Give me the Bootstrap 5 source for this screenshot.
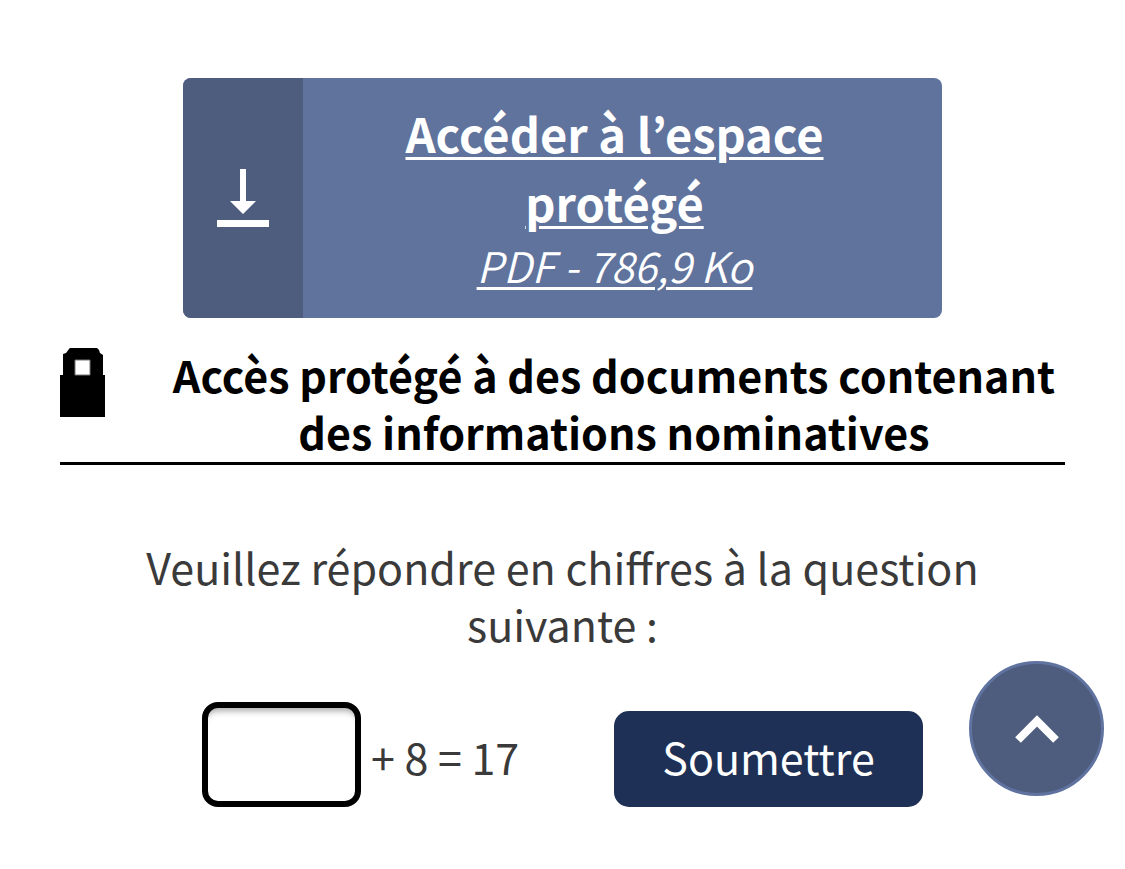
<!DOCTYPE html>
<html lang="fr">
<head>
<meta charset="utf-8">
<meta name="viewport" content="width=device-width, initial-scale=1">
<title>Espace protégé</title>
<link rel="stylesheet" href="https://cdn.jsdelivr.net/npm/bootstrap@5.3.0/dist/css/bootstrap.min.css">
<style>
body{font-family:"Noto Sans CJK JP","Noto Sans",sans-serif;font-size:43px;line-height:57px;color:#3a3a3a}
main{padding:78px 60px 60px}
.download{max-width:759px;min-height:240px;border-radius:8px;background:#60739d;color:#fff;overflow:hidden;text-decoration-thickness:3px;text-underline-offset:4px}
.download:hover{color:#fff}
.download-icon{width:120px;background:#4e5d7d}
.download-text{padding:20px 64px 25px 48px}
.download-title{font-size:47px;line-height:69px;font-weight:700}
.download-text em{font-weight:350;font-size:42px}
.locked{margin-top:30px;border-bottom:3px solid #000;color:#000}
.locked h2{margin:-2px 0 2px 58px;font-size:43px;line-height:57px;font-weight:700}
.question{margin:73px 0 50px}
.captcha{max-width:721px}
.captcha label{line-height:90px;padding-bottom:6px;margin-left:10px}
.answer{width:159px;height:105px;border:6px solid #000;border-radius:16px;box-shadow:inset 0 9px 6px -6px #aaa}
.send{width:309px;height:96px;padding:0 0 6px;border-radius:15px;font-size:43px}
.send,.send:hover{background:#1e3055;color:#fff}
.to-top{width:135px;height:135px;right:21px;bottom:73px;background:#4e5d7d;border:3px solid #6073a0}
</style>
</head>
<body>
<main class="text-center">
<a class="download d-flex mx-auto" href="#">
<span class="download-icon flex-shrink-0 d-flex align-items-center justify-content-center"><svg width="52" height="58" viewBox="0 0 52 58" fill="#fff" aria-hidden="true"><path d="M23 0h6v32h10L26 45 13 32h10zM0 51h52v7H0z"/></svg></span>
<span class="download-text flex-fill d-flex flex-column justify-content-center"><span class="download-title">Accéder à l’espace protégé</span><em>PDF - 786,9 Ko</em></span>
</a>
<section class="locked d-flex">
<svg class="flex-shrink-0" width="45" height="69" viewBox="0 0 45 69" aria-hidden="true"><path d="M0 69V27h3V6l3-1 3-4 1-1h27l2 2 1 3 3 2v20h2v42z"/><path d="M15 12h15v15H15z" fill="#fff" stroke="#777"/></svg>
<h2 class="flex-fill">Accès protégé à des documents contenant des informations nominatives</h2>
</section>
<form>
<p class="question">Veuillez répondre en chiffres à la question suivante :</p>
<div class="captcha d-flex align-items-end justify-content-between mx-auto">
<div class="d-flex align-items-end"><input id="answer" class="answer" type="text" inputmode="numeric"><label for="answer">+ 8 = 17</label></div>
<button class="send btn" type="submit">Soumettre</button>
</div>
</form>
</main>
<a class="to-top rounded-circle position-fixed d-flex align-items-center justify-content-center" href="#" aria-label="Haut de page"><svg width="44" height="28" viewBox="0 0 44 28" fill="none" stroke="#fff" stroke-width="8" aria-hidden="true"><path d="M3 25 22 6l19 19"/></svg></a>
<script src="https://cdn.jsdelivr.net/npm/bootstrap@5.3.0/dist/js/bootstrap.bundle.min.js"></script>
</body>
</html>
